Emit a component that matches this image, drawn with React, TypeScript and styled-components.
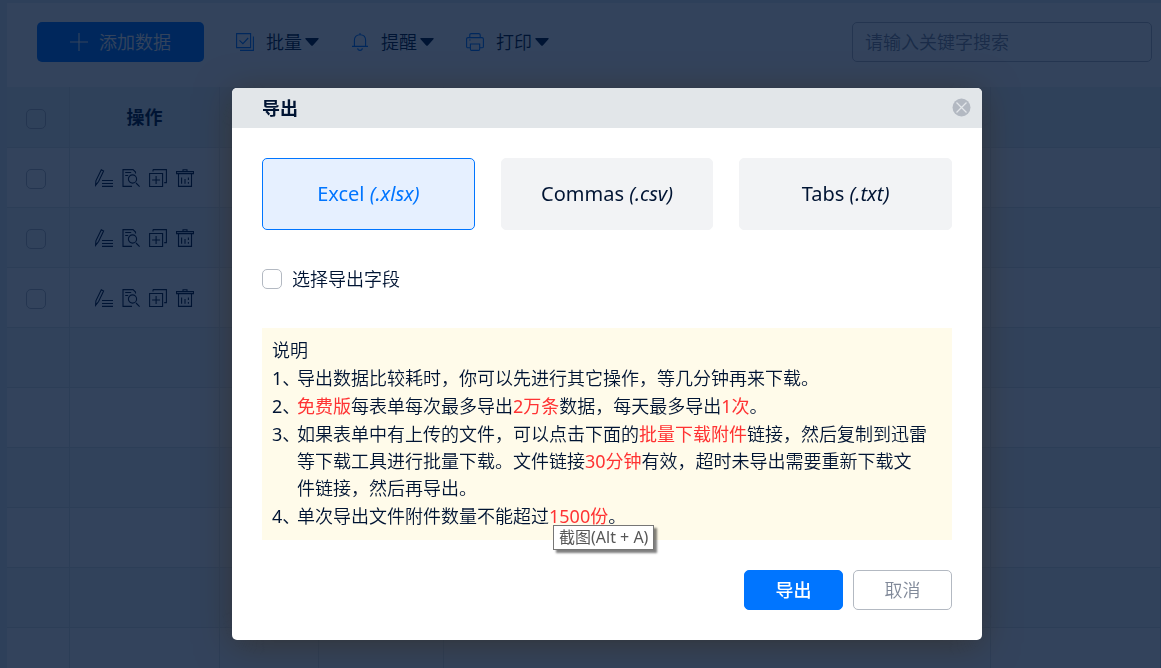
import React from "react";
import styled, { createGlobalStyle } from "styled-components";

const ink = "#001433";
const blue = "#0075ff";

const GlobalStyle = createGlobalStyle`
  * { box-sizing: border-box; }
  body {
    margin: 0;
    overflow: hidden;
    background: #e6f0f5;
    color: ${ink};
    font: 350 18px/28px "Noto Sans", "Noto Sans CJK SC", sans-serif;
  }
  button, input { font: inherit; color: inherit; }
  button { cursor: pointer; }
`;

const Page = styled.main`
  height: 100vh;
  overflow: hidden;
  padding: 3px 0 0 7px;
`;

const Toolbar = styled.header`
  display: flex;
  align-items: center;
  gap: 32px;
  height: 84px;
  padding: 0 9px 6px 30px;
  background: #fff;
`;

const AddButton = styled.button`
  display: flex;
  align-items: center;
  justify-content: center;
  gap: 11px;
  width: 167px;
  height: 40px;
  padding: 0;
  border: 0;
  border-radius: 5px;
  background: ${blue};
  color: #fff;
`;

const ToolButton = styled.button`
  display: flex;
  align-items: center;
  gap: 3px;
  padding: 0;
  border: 0;
  background: none;
  svg:first-child { margin-right: 9px; color: ${blue}; }
`;

const Search = styled.input`
  width: 300px;
  height: 40px;
  margin-left: auto;
  padding: 0 12px;
  border: 1px solid #b3b9c2;
  border-radius: 5px;
  background: #fff;
  &::placeholder { color: #808999; opacity: 1; }
`;

const Grid = styled.table`
  width: 100%;
  border-collapse: separate;
  border-spacing: 0;
  table-layout: fixed;
  th, td {
    height: 60px;
    padding: 0;
    border-right: 1px solid #dce3e6;
    border-bottom: 1px solid #dce3e6;
    text-align: center;
  }
  th:first-child, td:first-child { padding: 3px 4px 0 0; }
  th { height: 61px; background: #ebf3f2; font-weight: 700; }
  td { background: #fff; }
  tr:nth-child(even) td { background: #f2f7fa; }
`;

const Check = styled.input`
  appearance: none;
  display: block;
  width: 20px;
  height: 20px;
  margin: 0;
  border: 1px solid #b3b9c2;
  border-radius: 5px;
  background: #fff;
  &:checked { background: ${blue}; }
  td &, th & { margin: 0 auto; background: none; }
`;

const RowActions = styled.div`
  display: flex;
  justify-content: center;
  gap: 9px;
`;

const IconButton = styled.button`
  display: flex;
  padding: 0;
  border: 0;
  background: none;
`;

const Overlay = styled.div`
  position: fixed;
  inset: 0;
  display: flex;
  align-items: flex-start;
  justify-content: center;
  padding: 88px 20px 20px 73px;
  background: rgba(0, 20, 51, 0.8);
`;

const Dialog = styled.section`
  width: 750px;
  border-radius: 5px;
  background: #fff;
  box-shadow: 0 5px 35px rgba(51, 51, 51, 0.9);
`;

const DialogHead = styled.header`
  display: flex;
  align-items: center;
  justify-content: space-between;
  height: 40px;
  padding: 0 11px 1px 30px;
  border-radius: 5px 5px 0 0;
  background: #e2e6e9;
`;

const Title = styled.h2`
  margin: 0;
  font-size: 18px;
  font-weight: 700;
`;

const DialogBody = styled.div`
  padding: 30px;
`;

const Formats = styled.div`
  display: grid;
  grid-template-columns: repeat(3, 1fr);
  gap: 26px;
`;

const Format = styled.button<{ $active?: boolean }>`
  height: 72px;
  padding: 0;
  border: 1px solid ${(p) => (p.$active ? blue : "#f2f3f5")};
  border-radius: 5px;
  background: ${(p) => (p.$active ? "#e6f0ff" : "#f2f3f5")};
  color: ${(p) => (p.$active ? blue : ink)};
  font-size: 20px;
  font-weight: 400;
`;

const FieldChoice = styled.label`
  display: flex;
  align-items: center;
  gap: 10px;
  margin: 35px 0;
`;

const Note = styled.div`
  padding: 9px 10px 10px;
  background: #fffbea;
  line-height: 27px;
`;

const Steps = styled.ol`
  display: flex;
  flex-direction: column;
  gap: 1px;
  margin: 1px 0 0;
  padding: 0;
  list-style: none;
`;

const Step = styled.li`
  display: flex;
`;

const Marker = styled.span`
  flex: none;
  width: 25px;
  font-feature-settings: "halt";
  font-weight: 400;
  white-space: nowrap;
`;

const Hot = styled.span`
  color: #ff3333;
  font-weight: 400;
`;

const Actions = styled.footer`
  display: flex;
  justify-content: flex-end;
  gap: 10px;
  margin-top: 30px;
`;

const ActionButton = styled.button<{ $primary?: boolean }>`
  width: 99px;
  height: 40px;
  padding: 0;
  border: 1px solid ${(p) => (p.$primary ? blue : "#b3b9c2")};
  border-radius: 5px;
  background: ${(p) => (p.$primary ? blue : "#fff")};
  color: ${(p) => (p.$primary ? "#fff" : "#808999")};
  font-weight: ${(p) => (p.$primary ? 500 : 350)};
`;

const TipAnchor = styled.span`
  position: relative;
`;

const Tip = styled.span`
  position: absolute;
  top: 21px;
  left: 4px;
  padding: 0 5px;
  border: 1px solid #767676;
  background: #fff;
  box-shadow: 3px 3px 2px rgba(0, 0, 0, 0.5);
  color: #575757;
  font-size: 16px;
  font-weight: 400;
  line-height: 23px;
  white-space: nowrap;
`;

type IconProps = { children: React.ReactNode };
const Icon = ({ children }: IconProps) => (
  <svg width="18" height="18" viewBox="0 0 18 18" fill="none" stroke="currentColor" strokeWidth="1.1" aria-hidden="true">
    {children}
  </svg>
);

const Caret = () => (
  <svg width="14" height="8" viewBox="0 0 14 8" aria-hidden="true">
    <path d="M1.2 0h11.6c.9 0 1.2.7.6 1.3L7.8 7.4c-.5.6-1.1.6-1.6 0L.6 1.3C0 .7.3 0 1.2 0z" fill={ink} />
  </svg>
);

const rowIcons = [
  {
    label: "编辑",
    art: <path d="M6.3.8 8.6 1.9 3.6 12.5.6 16.3l.3-4.5zM7 11.5h11M7 14.5h11M7 17.4h11" />,
  },
  {
    label: "查看",
    art: (
      <>
        <path d="M13.5 4.5V3L11 .6H1v16.8h9M3.2 3.5h6M3.2 6.5h3M14 14l3.6 3.6" />
        <circle cx="10.5" cy="10" r="4.1" />
      </>
    ),
  },
  {
    label: "复制",
    art: <path d="M.6 4.5h13v13H.6zM4 .6h13.4v13h-2.2M4 .6v1.8M7.1 7v8M3.1 11h8" />,
  },
  {
    label: "删除",
    art: <path d="M.5 2.6h17v2H.5zM7 2.6V.7h4v1.9M2.5 4.6v12.8h13V4.6M5.6 8.5v6.3M9 10v4.8M12.4 8.5v2.5M12.4 13v1.8" />,
  },
];

const ColumnWidths = () => (
  <colgroup>
    <col style={{ width: 63 }} />
    <col style={{ width: 150 }} />
    <col style={{ width: 99 }} />
    <col style={{ width: 125 }} />
    <col style={{ width: 547 }} />
    <col />
  </colgroup>
);

const formats = [
  { name: "Excel", ext: "(.xlsx)" },
  { name: "Commas", ext: "(.csv)" },
  { name: "Tabs", ext: "(.txt)" },
];

export default function App() {
  const [format, setFormat] = React.useState("Excel");
  return (
    <>
      <GlobalStyle />
      <Page>
        <Toolbar>
          <AddButton type="button">
            <Icon>
              <path d="M9 0v18M0 9h18" />
            </Icon>
            添加数据
          </AddButton>
          <ToolButton type="button">
            <Icon>
              <path d="M.6.6h14v14H.6zM17.4 3.5v13.9H4M3.5 7.3l3.4 3.3 5.3-5.6" />
            </Icon>
            批量
            <Caret />
          </ToolButton>
          <ToolButton type="button">
            <Icon>
              <path d="M1 13.4h16M3.4 13.4V7.2C3.4 3.8 5.8 1.7 9 1.7s5.6 2.1 5.6 5.5v6.2M9 0v1.7M6.7 15.3c.2 2.8 4.4 2.8 4.6 0" />
            </Icon>
            提醒
            <Caret />
          </ToolButton>
          <ToolButton type="button">
            <Icon>
              <path d="M3.8 4V2q0-1.4 1.4-1.4h7.6q1.4 0 1.4 1.4v2M4.3 14.8H2q-1.4 0-1.4-1.4V6.1q0-1.5 1.4-1.5h14q1.4 0 1.4 1.5v7.3q0 1.4-1.4 1.4h-2.3M4.4 11h9.3v5.2q0 1.2-1.2 1.2h-7q-1.1 0-1.1-1.2zM3.2 7h1.4" />
            </Icon>
            打印
            <Caret />
          </ToolButton>
          <Search type="search" placeholder="请输入关键字搜索" aria-label="搜索" />
        </Toolbar>
        <Grid>
          <ColumnWidths />
          <thead>
            <tr>
              <th><Check type="checkbox" aria-label="全选" /></th>
              <th>操作</th>
              <th /><th /><th /><th />
            </tr>
          </thead>
          <tbody>
            {Array.from({ length: 9 }, (_, row) => (
              <tr key={row}>
                <td>{row < 3 && <Check type="checkbox" aria-label={`选择第${row + 1}行`} />}</td>
                <td>
                  {row < 3 && (
                    <RowActions>
                      {rowIcons.map((icon) => (
                        <IconButton key={icon.label} type="button" aria-label={icon.label}>
                          <Icon>{icon.art}</Icon>
                        </IconButton>
                      ))}
                    </RowActions>
                  )}
                </td>
                <td /><td /><td /><td />
              </tr>
            ))}
          </tbody>
        </Grid>
      </Page>
      <Overlay>
        <Dialog role="dialog" aria-modal="true" aria-labelledby="export-title">
          <DialogHead>
            <Title id="export-title">导出</Title>
            <IconButton type="button" aria-label="关闭">
              <svg width="19" height="19" viewBox="0 0 19 19" aria-hidden="true">
                <circle cx="9.5" cy="9.5" r="9" fill="#b3b9c2" />
                <path d="m4.5 4.5 10 10m0-10-10 10" stroke="#e2e6e9" strokeWidth="1.3" />
              </svg>
            </IconButton>
          </DialogHead>
          <DialogBody>
            <Formats>
              {formats.map((f) => (
                <Format key={f.name} type="button" $active={f.name === format} onClick={() => setFormat(f.name)}>
                  {f.name} <em>{f.ext}</em>
                </Format>
              ))}
            </Formats>
            <FieldChoice>
              <Check type="checkbox" />
              选择导出字段
            </FieldChoice>
            <Note>
              <div>说明</div>
              <Steps>
                <Step>
                  <Marker>1、</Marker>
                  <span>导出数据比较耗时，你可以先进行其它操作，等几分钟再来下载。</span>
                </Step>
                <Step>
                  <Marker>2、</Marker>
                  <span><Hot>免费版</Hot>每表单每次最多导出<Hot>2万条</Hot>数据，每天最多导出<Hot>1次</Hot>。</span>
                </Step>
                <Step>
                  <Marker>3、</Marker>
                  <span>
                    如果表单中有上传的文件，可以点击下面的<Hot>批量下载附件</Hot>链接，然后复制到迅雷<br />
                    等下载工具进行批量下载。文件链接<Hot>30分钟</Hot>有效，超时未导出需要重新下载文<br />
                    件链接，然后再导出。
                  </span>
                </Step>
                <Step>
                  <Marker>4、</Marker>
                  <span>
                    单次导出文件附件数量不能超过
                    <TipAnchor>
                      <Hot>1500份</Hot>
                      <Tip role="tooltip">截图(Alt + A)</Tip>
                    </TipAnchor>
                    。
                  </span>
                </Step>
              </Steps>
            </Note>
            <Actions>
              <ActionButton type="button" $primary>导出</ActionButton>
              <ActionButton type="button">取消</ActionButton>
            </Actions>
          </DialogBody>
        </Dialog>
      </Overlay>
    </>
  );
}
